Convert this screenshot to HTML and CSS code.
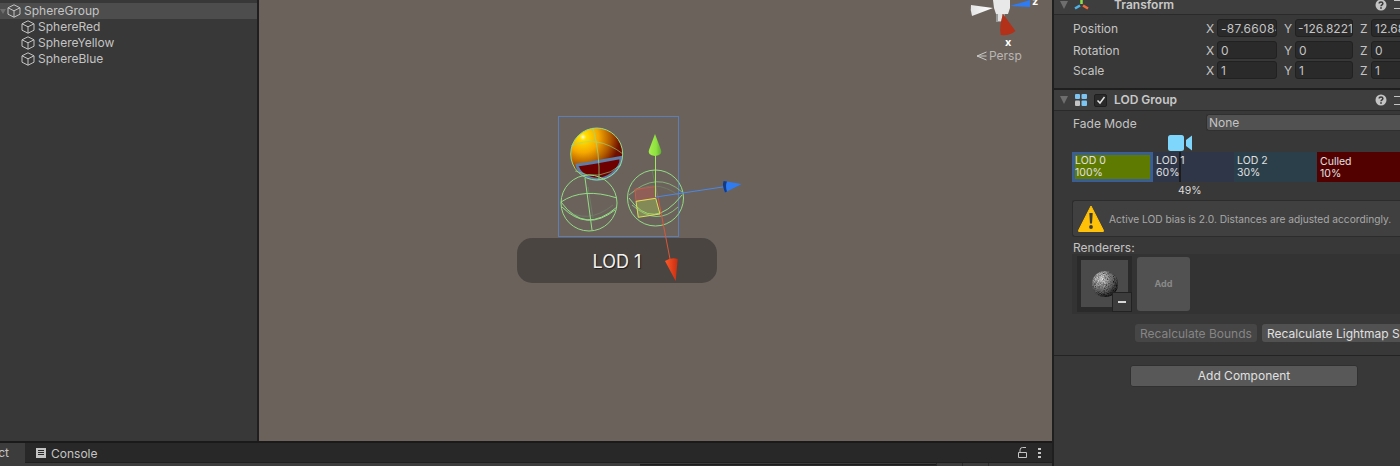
FILE: index.html
```html
<!DOCTYPE html>
<html lang="en">
<head>
<meta charset="utf-8">
<title>Unity LOD Group</title>
<link rel="stylesheet" href="styles.css">
</head>
<body>
<svg class="defs" width="0" height="0" aria-hidden="true">
  <defs>
    <symbol id="cube" viewBox="0 0 14 14">
      <path d="M7 .8 13 3.800V10.200L7 13.200 1 10.200V3.800Z M1 3.800 7 6.800 13 3.800 M7 6.800V13.200" fill="none" stroke="#c4c4c4" stroke-width="1"/>
    </symbol>
    <symbol id="help" viewBox="0 0 12 12">
      <circle cx="6" cy="6" r="5.500" fill="#c4c4c4"/>
      <path d="M4.200 4.600C4.200 2.400 7.900 2.500 7.900 4.500 7.900 5.800 6 5.800 6 7.300" fill="none" stroke="#383838" stroke-width="1.500"/>
      <rect x="5.200" y="8.200" width="1.600" height="1.600" fill="#383838"/>
    </symbol>
  </defs>
</svg>
<div class="app">
  <div class="upper">
    <aside class="hierarchy">
      <div class="tree-row selected">
        <span class="fold"></span>
        <svg class="cube"><use href="#cube"/></svg>
        <span>SphereGroup</span>
      </div>
      <div class="tree-row child"><svg class="cube"><use href="#cube"/></svg><span>SphereRed</span></div>
      <div class="tree-row child"><svg class="cube"><use href="#cube"/></svg><span>SphereYellow</span></div>
      <div class="tree-row child"><svg class="cube"><use href="#cube"/></svg><span>SphereBlue</span></div>
    </aside>
    <main class="scene">
      <div class="lod-pill">LOD 1</div>
      <div class="persp"><svg class="persp-icon" viewBox="0 0 11 10"><path d="M10.500 1 1 5 10.500 9 M1 5H10.500" fill="none" stroke="#c9c9c9" stroke-width="1"/></svg>Persp</div>
      <div class="axis-x">x</div>
      <div class="axis-z">z</div>
      <svg class="scene-art" viewBox="259 0 793 441" aria-hidden="true">
        <defs>
          <radialGradient id="gold" gradientUnits="userSpaceOnUse" cx="583" cy="137" r="46">
            <stop offset="0" stop-color="#fffbd0"/>
            <stop offset=".07" stop-color="#ffe000"/>
            <stop offset=".34" stop-color="#f5a800"/>
            <stop offset=".6" stop-color="#b05800"/>
            <stop offset=".8" stop-color="#701000"/>
            <stop offset="1" stop-color="#6a0000"/>
          </radialGradient>
          <linearGradient id="cone-green" x1="0" x2="1" y1="0" y2="0">
            <stop offset="0" stop-color="#a6f04c"/><stop offset=".6" stop-color="#8ee040"/><stop offset="1" stop-color="#5fae2c"/>
          </linearGradient>
          <linearGradient id="cone-red" x1="0" x2="1" y1="0" y2="0">
            <stop offset="0" stop-color="#ff5a28"/><stop offset="1" stop-color="#c92c10"/>
          </linearGradient>
          <linearGradient id="cone-white" x1="0" x2="1" y1="0" y2="0">
            <stop offset="0" stop-color="#e4e4e4"/><stop offset="1" stop-color="#ffffff"/>
          </linearGradient>
        </defs>

        <rect x="558.500" y="116.500" width="120" height="120" fill="none" stroke="#5c7fb8" stroke-width="1"/>

        <circle cx="596.700" cy="154" r="26" fill="url(#gold)"/>
        <path d="M577 165Q597 162 621 157.500 622 166 612 174 598 184 584 175 578 171 577 165Z" fill="#6e0000"/>
        <path d="M577 165Q597 162 621 157.500 622 166 612 174 598 184 584 175 578 171 577 165Z" fill="none" stroke="#5f7ca6" stroke-width="3"/>
        <g fill="none" stroke="#94dc86" stroke-width="1">
          <circle cx="596.700" cy="154" r="26"/>
          <path d="M593 128Q600 154 599 180" stroke-opacity=".75"/>
          <path d="M571 146Q597 134 623 154" stroke-opacity=".6"/>
          <path d="M575 171Q600 182 621 165" stroke-opacity=".6"/>
        </g>

        <g fill="none" stroke="#6f7a68" stroke-width="1">
          <path d="M588 187 593 218"/>
          <path d="M563 208Q587 226 613 205"/>
        </g>
        <g fill="none" stroke="#94dc86" stroke-width="1">
          <circle cx="589" cy="203" r="28"/>
          <path d="M561 202Q583 187 617 198"/>
          <path d="M561 202Q585 235 617 207"/>
          <path d="M562 207Q587 232 615 210"/>
          <path d="M585 178 592 230"/>
        </g>

        <g fill="none" stroke="#6f7a68" stroke-width="1">
          <path d="M652 170 658 197"/>
          <path d="M632 193Q655 178 678 195"/>
        </g>
        <g fill="none" stroke="#94dc86" stroke-width="1">
          <circle cx="655.500" cy="198" r="28"/>
          <path d="M629 195Q657 170 682 192" stroke-opacity=".65"/>
          <path d="M629 198Q653 232 682 195"/>
          <path d="M632 205Q657 227 678 207" stroke-opacity=".8"/>
        </g>

        <path d="M635 189.300 655.700 186.700V198.300L636 201.300Z" fill="#c85a50" fill-opacity=".4" stroke="#c65b4b"/>
        <path d="M636 201.300 655.700 198.300 660 214 638.300 217.300Z" fill="#a8c850" fill-opacity=".4" stroke="#d8e060"/>

        <path d="M655.500 197V155" stroke="#a0e864" stroke-width="1" fill="none"/>
        <path d="M655 134 661 150Q663 155 655 156 647 155 649 150Z" fill="url(#cone-green)"/>

        <path d="M656 197 726 186.500" stroke="#4a88e8" stroke-width="1" fill="none"/>
        <path d="M723.500 181 741.700 184 725 192.600Q722 188 723.500 181Z" fill="#2f7bf2"/>
        <path d="M723.500 181Q722 186 725 192.600L727 191.500Q725 186 727 181.500Z" fill="#123a86"/>

        <path d="M658 197 670 259" stroke="#d8583a" stroke-width="1" fill="none"/>
        <path d="M665 261Q671 257 677.700 259L675.700 281Z" fill="url(#cone-red)"/>

        <path d="M993 0H1010V8L1008 14H996L994 8Z" fill="#e8e8e8"/>
        <path d="M996 14H1005V22H996Z" fill="#9a9a9a"/>
        <path d="M998 14H1002V21H998Z" fill="#e0e0e0"/>
        <path d="M971 5 993 8 972 16Q970 10 971 5Z" fill="url(#cone-white)"/>
        <path d="M1010 6 1030 0V7Z" fill="#2f7bf2"/>
        <path d="M1000.700 35Q999 26 1003 14L1015.500 31Q1010 36 1000.700 35Z" fill="#b23118"/>
      </svg>
    </main>
  </div>
  <footer class="tabs">
    <div class="tab-row">
      <div class="tab active">ct</div>
      <div class="tab console">
        <svg class="console-icon" viewBox="0 0 10 10"><path fill-rule="evenodd" d="M0 0H10V10H0Z M2 2V3H8V2Z M2 4V5H8V4Z M2 6V7H8V6Z" fill="#c4c4c4"/></svg>
        Console
      </div>
      <div class="tab-tools">
        <svg class="lock" viewBox="0 0 9 11"><path d="M.5 5.500H8.500V10.500H.5Z M2 5.500V3Q2 .5 4.500 .5H8" fill="none" stroke="#c4c4c4" stroke-width="1"/></svg>
        <span class="dots"></span>
      </div>
    </div>
    <div class="toolbar"><span class="search"></span><span class="tool"></span><span class="tool"></span><span class="tool"></span></div>
  </footer>
</div>

<aside class="inspector">
  <header class="comp-head first">
    <span class="fold"></span>
    <svg class="comp-icon" viewBox="0 0 15 10"><path d="M7.500 0V4" stroke="#8fe14a" stroke-width="2.500"/><path d="M6 5.500 1 8.500" stroke="#4cb3ea" stroke-width="2.500"/><path d="M9 5.500 14 8.500" stroke="#ef6b3c" stroke-width="2.500"/></svg>
    <span class="no-check"></span>
    <strong>Transform</strong>
    <svg class="help"><use href="#help"/></svg>
    <span class="cog"></span>
  </header>
  <section class="transform">
    <div class="vec first-vec"><span class="vec-label">Position</span><span class="ax">X</span><span class="field wide-num">-87.66084</span><span class="ax">Y</span><span class="field short tight">-126.8221</span><span class="ax">Z</span><span class="field">12.68</span></div>
    <div class="vec rot-vec"><span class="vec-label">Rotation</span><span class="ax">X</span><span class="field">0</span><span class="ax">Y</span><span class="field short">0</span><span class="ax">Z</span><span class="field">0</span></div>
    <div class="vec"><span class="vec-label">Scale</span><span class="ax">X</span><span class="field">1</span><span class="ax">Y</span><span class="field short">1</span><span class="ax">Z</span><span class="field">1</span></div>
  </section>
  <header class="comp-head second">
    <span class="fold"></span>
    <svg class="comp-icon lod-icon" viewBox="0 0 12 12"><rect x="0" y="0" width="5" height="5" rx="1" fill="#7cc5f2"/><rect x="6.500" y="0" width="5.500" height="5" rx="1" fill="#7cc5f2"/><rect x="0" y="6.500" width="5" height="5.500" rx="1" fill="#c4c4c4"/><rect x="6.500" y="6.500" width="5.500" height="5.500" rx="1" fill="#7cc5f2"/></svg>
    <span class="check"><svg viewBox="0 0 10 10"><path d="M1.500 5.500 4 8 8.500 2" fill="none" stroke="#e4e4e4" stroke-width="1.500"/></svg></span>
    <strong>LOD Group</strong>
    <svg class="help"><use href="#help"/></svg>
    <span class="cog"></span>
  </header>
  <section class="lod">
    <div class="fade"><span class="fade-label">Fade Mode</span><span class="dropdown">None</span></div>
    <svg class="camera" viewBox="0 0 24 16"><rect x="0" y="0" width="16" height="16" rx="2.500" fill="#7fd6fd"/><path d="M18 5 24 .5V15.500L18 11Z" fill="#7fd6fd"/></svg>
    <div class="lod-bar">
      <div class="seg seg0"><span>LOD 0</span><span>100%</span></div>
      <div class="seg seg1"><i class="marker"></i><span class="over">LOD 1</span><span class="over">60%</span></div>
      <div class="seg seg2"><span>LOD 2</span><span>30%</span></div>
      <div class="seg seg3"><span>Culled</span><span>10%</span></div>
    </div>
    <div class="pct">49%</div>
    <div class="helpbox">
      <svg class="warn" viewBox="0 0 26 27"><path d="M13 1 25.500 25.500Q26 26.500 25 26.500H1Q0 26.500 .5 25.500Z" fill="#ffc107" stroke="#ffc107" stroke-linejoin="round"/><path d="M11.300 8H14.700L14 18.500H12Z" fill="#3a3a3a"/><circle cx="13" cy="22" r="1.900" fill="#3a3a3a"/></svg>
      <span>Active LOD bias is 2.0. Distances are adjusted accordingly.</span>
    </div>
    <div class="rend-label">Renderers:</div>
    <div class="rend-panel">
      <div class="thumb">
        <div class="thumb-inner">
          <svg class="ball" viewBox="0 0 28 28">
            <defs>
              <radialGradient id="ballg" cx=".35" cy=".3" r=".75"><stop offset="0" stop-color="#f0f0f0"/><stop offset=".45" stop-color="#909090"/><stop offset="1" stop-color="#1c1c1c"/></radialGradient>
              <filter id="grain" x="0" y="0" width="100%" height="100%"><feTurbulence type="fractalNoise" baseFrequency="1.100" numOctaves="2" seed="4" result="n"/><feColorMatrix in="n" type="matrix" values="0 0 0 0 0 0 0 0 0 0 0 0 0 0 0 1.800 0 0 0 -.55"/><feComposite in2="SourceGraphic" operator="in" result="g"/><feMerge><feMergeNode in="SourceGraphic"/><feMergeNode in="g"/></feMerge></filter>
            </defs>
            <circle cx="14" cy="14" r="13" fill="url(#ballg)" filter="url(#grain)"/>
          </svg>
        </div>
        <span class="minus"></span>
      </div>
      <div class="add-tile">Add</div>
    </div>
    <div class="recalc"><span class="btn off">Recalculate Bounds</span><span class="btn">Recalculate Lightmap Scale</span></div>
  </section>
  <div class="add-wrap"><span class="add-component">Add Component</span></div>
</aside>
</body>
</html>
```

FILE: styles.css
```css
* { box-sizing: border-box; }
html, body { margin: 0; height: 466px; overflow: hidden; }
body {
  display: flex;
  width: 1400px;
  background: #1f1f1f;
  font: 12px/16px Inter, "Liberation Sans", sans-serif;
  color: #c4c4c4;
}
.defs { display: block; flex: none; }

.app { width: 1052px; height: 466px; display: flex; flex-direction: column; flex: none; }
.upper { flex: none; height: 441px; display: flex; }

.hierarchy { width: 257px; flex: none; background: #383838; padding-top: 3px; }
.tree-row { height: 16px; display: flex; align-items: center; white-space: nowrap; gap: 3px; }
.tree-row.selected { background: #4d4d4d; gap: 1px; }
.tree-row.selected .cube { margin-right: 2px; }
.tree-row.child { padding-left: 21px; }
.cube { width: 14px; height: 14px; flex: none; }
.fold {
  width: 0; height: 0; flex: none;
  border-style: solid;
  border-width: 8px 4.500px 0;
  border-color: #6e6e6e transparent transparent;
}
.tree-row .fold { border-width: 5px 3px 0; }

.scene {
  position: relative;
  margin-left: 2px;
  flex: 1;
  background: #6b625c;
  overflow: hidden;
}
.scene-art { position: absolute; left: 0; top: 0; width: 793px; height: 441px; }
.lod-pill {
  position: absolute;
  left: 258px; top: 238px;
  width: 200px; height: 45px;
  border-radius: 15px;
  background: #4a4541;
  color: #f2f2f2;
  font-size: 18px;
  line-height: 47px;
  text-align: center;
  text-shadow: 1px 1px 1px #1c1c1c;
}
.persp {
  position: absolute;
  left: 717px; top: 48px;
  display: flex; align-items: center; gap: 2px;
  color: #b9b6b3;
  font-size: 12px;
}
.persp-icon { width: 11px; height: 10px; }
.axis-x {
  position: absolute;
  left: 746px; top: 34px;
  color: #fff;
  font-size: 11px;
  font-weight: 700;
}
.axis-z {
  position: absolute;
  left: 773px; top: -7px;
  color: #fff;
  font-size: 11px;
  font-weight: 700;
}

.tabs {
  flex: 1;
  display: flex;
  flex-direction: column;
  background: #3c3c3c;
  border-top: 2px solid #1a1a1a;
}
.tab-row { height: 19px; flex: none; display: flex; background: #282828; }
.tab { display: flex; align-items: center; gap: 5px; font-size: 12px; }
.tab.active { width: 25px; background: #3c3c3c; justify-content: flex-end; padding-right: 16px; overflow: hidden; }
.tab.console { margin-left: 11px; padding-top: 2px; }
.console-icon { width: 10px; height: 10px; margin-top: -1px; }
.tab-tools { margin-left: auto; display: flex; align-items: center; gap: 11px; padding: 0 11px 0 0; }
.lock { width: 9px; height: 11px; }
.dots { width: 3px; height: 11px; background: radial-gradient(circle, #c4c4c4 1.400px, transparent 1.500px) 0 0 / 3px 4px; }
.toolbar { flex: 1; display: flex; align-items: flex-start; border-top: 1px solid #1f1f1f; margin-left: 25px; padding-left: 615px; overflow: hidden; }
.search { width: 296px; height: 2px; margin-top: 1px; background: #2a2a2a; border-top: 1px solid #1c1c1c; flex: none; }
.tool { width: 26px; height: 3px; border-left: 1px solid #2a2a2a; flex: none; }
.tool:first-of-type { margin-left: 4px; }

.inspector {
  width: 346px;
  margin-left: 2px;
  flex: none;
  height: 466px;
  background: #383838;
  overflow: hidden;
}
.comp-head { display: flex; align-items: center; background: #3e3e3e; padding-left: 6px; white-space: nowrap; }
.comp-head strong { font-weight: 600; color: #c8c8c8; }
.comp-head.first { height: 15px; padding-bottom: 5px; border-bottom: 1px solid #2a2a2a; }
.comp-head.second { height: 21px; border-bottom: 1px solid #2a2a2a; }
.comp-icon { width: 15px; height: 10px; margin-left: 6px; flex: none; }
.lod-icon { width: 12px; height: 12px; margin-left: 7px; }
.no-check { width: 25px; flex: none; }
.check {
  width: 13px; height: 13px; flex: none; margin: 0 7px;
  background: #2a2a2a; border: 1px solid #1e1e1e; border-radius: 2px;
  display: flex; align-items: center; justify-content: center;
}
.check svg { width: 10px; height: 10px; }
.help { width: 12px; height: 12px; margin-left: auto; flex: none; }
.cog { width: 6px; height: 9px; margin-left: 7px; flex: none; border-top: 1px solid #c4c4c4; border-bottom: 1px solid #c4c4c4; }

.transform { padding: 4px 0 9px 19px; border-bottom: 2px solid #1f1f1f; }
.vec { display: flex; height: 18px; align-items: flex-start; white-space: nowrap; margin-top: 2px; line-height: 20px; }
.first-vec { margin-top: 0; }
.rot-vec { margin-top: 4px; }
.vec-label { width: 133px; flex: none; }
.ax { width: 11px; flex: none; margin-left: 7px; }
.vec-label + .ax { margin-left: 0; }
.field {
  width: 60px; height: 18px; flex: none;
  background: #2a2a2a; border: 1px solid #212121; border-radius: 3px;
  padding-left: 3px; line-height: 18px;
  overflow: hidden;
}
.field.short { width: 58px; }
.field.wide-num { letter-spacing: .3px; }
.field.tight { padding-left: 2px; }

.lod { padding: 3px 0 13px 18px; border-bottom: 1px solid #232323; }
.fade { display: flex; align-items: center; height: 17px; white-space: nowrap; }
.fade-label { width: 134px; flex: none; padding-left: 1px; padding-top: 3px; }
.dropdown {
  flex: 1; height: 17px;
  background: #515151; border: 1px solid #303030; border-right: 0; border-radius: 3px 0 0 3px;
  padding-left: 2px; line-height: 16px;
}
.camera { display: block; width: 24px; height: 16px; margin: 4px 0 1px 96px; }
.lod-bar { display: flex; height: 30px; font-size: 10.500px; line-height: 12px; color: #e0e0e0; }
.seg { display: flex; flex-direction: column; padding: 3px 0 0 3px; position: relative; white-space: nowrap; }
.seg0 { width: 81px; background: #5f7a00; border: 3px solid #3a5d92; padding: 0; }
.seg1 { width: 81px; background: #2e3648; }
.seg2 { width: 83px; background: #2a3f4a; }
.seg3 { flex: 1; background: #530000; }
.seg3 span:first-child { margin-top: 1px; }
.over { position: relative; }
.marker { position: absolute; left: 26px; top: 0; width: 2px; height: 30px; background: #1c1c1c; }
.pct { height: 18px; padding-left: 106px; font-size: 10.500px; line-height: 17px; color: #dcdcdc; }
.helpbox {
  height: 37px;
  display: flex; align-items: center; gap: 5px;
  padding-left: 5px;
  background: #404040; border: 1px solid #2c2c2c; border-right: 0; border-radius: 3px 0 0 3px;
  color: #a8a8a8; font-size: 10.200px; white-space: nowrap;
}
.warn { width: 26px; height: 27px; flex: none; }
.rend-label { height: 17px; padding-left: 1px; line-height: 21px; }
.rend-panel { height: 60px; background: #333333; display: flex; align-items: flex-start; padding: 2px 0 0 5px; gap: 5px; }
.thumb { width: 55px; height: 56px; background: #2a2a2a; padding: 4px; position: relative; flex: none; }
.thumb-inner { width: 47px; height: 47px; background: #4a4a4a; display: flex; align-items: center; justify-content: center; }
.ball { width: 28px; height: 28px; display: block; }
.minus {
  position: absolute; right: 0; bottom: 0;
  width: 20px; height: 20px;
  background: #3c3c3c; border: 1px solid #222;
}
.minus::after { content: ""; position: absolute; left: 5px; top: 8px; width: 8px; height: 2px; background: #d8d8d8; }
.add-tile {
  width: 53px; height: 54px; margin-top: 1px;
  background: #515151; border-radius: 3px;
  color: #8a8a8a; font-size: 9px; font-weight: 700;
  display: flex; align-items: center; justify-content: center;
}
.recalc { display: flex; gap: 5px; margin-top: 10px; margin-left: 63px; white-space: nowrap; }
.btn { flex: none; height: 18px; padding: 0 5px; background: #515151; border-radius: 3px; color: #e0e0e0; line-height: 19px; font-size: 12px; }
.btn.off { width: 122px; background: #464646; color: #858585; }
.add-wrap { padding: 9px 0 0 76px; }
.add-component {
  display: block; width: 228px; height: 22px;
  background: #585858; border: 1px solid #303030; border-radius: 3px;
  color: #e0e0e0; text-align: center; line-height: 20px;
}
```
